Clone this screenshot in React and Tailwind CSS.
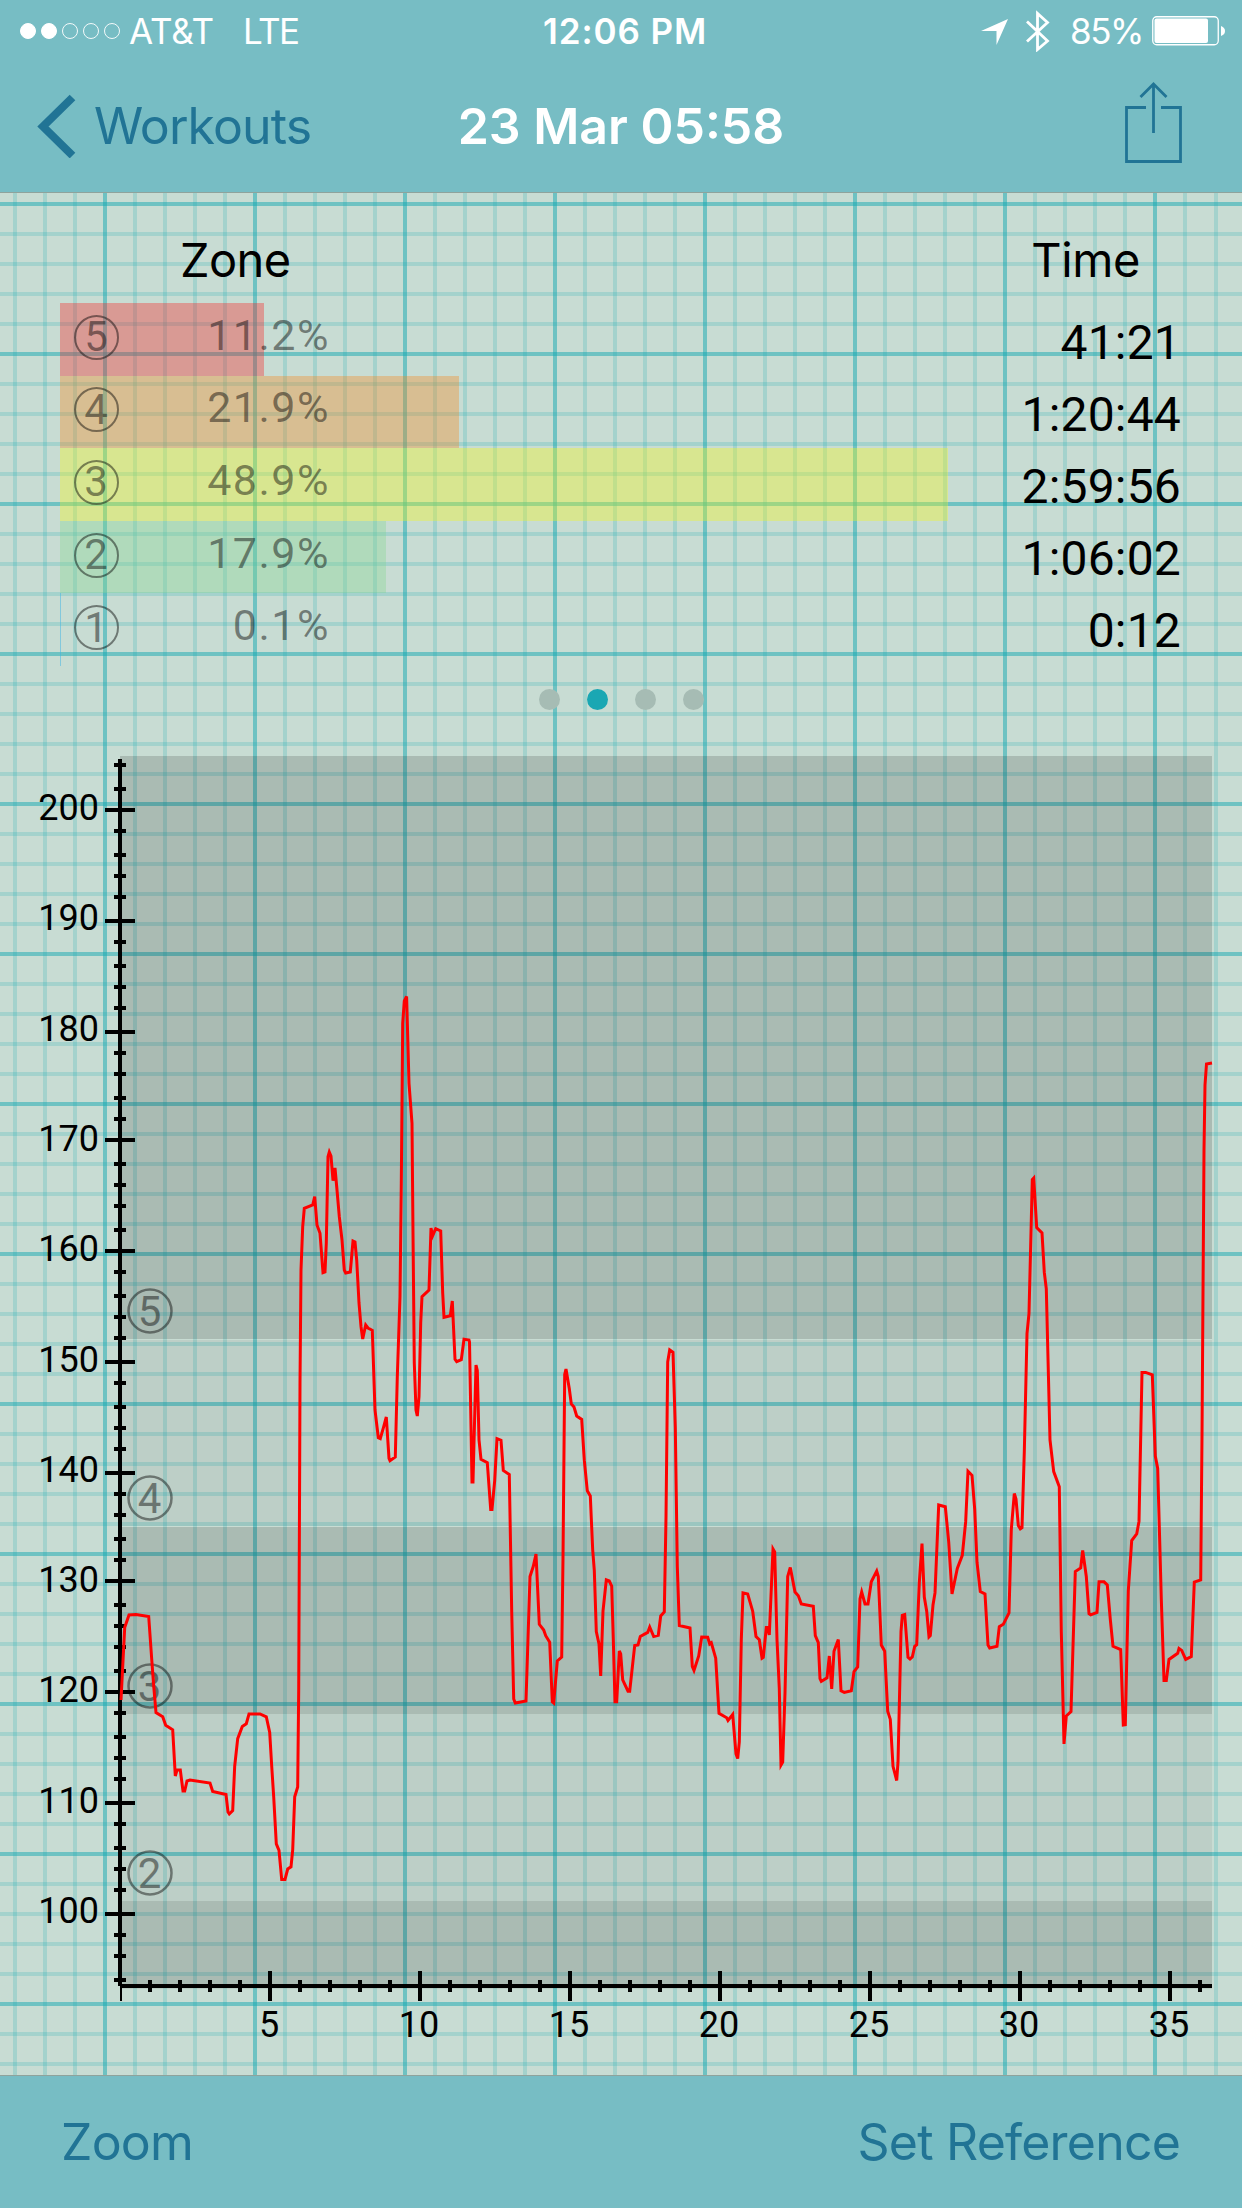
import React from "react";

const zones = [
  { zone: 5, percent: "11.2%", time: "41:21", width: 204, color: "bg-[rgba(249,31,31,0.35)]" },
  { zone: 4, percent: "21.9%", time: "1:20:44", width: 398.5, color: "bg-[rgba(246,134,26,0.35)]" },
  { zone: 3, percent: "48.9%", time: "2:59:56", width: 887.5, color: "bg-[rgba(246,249,20,0.35)]" },
  { zone: 2, percent: "17.9%", time: "1:06:02", width: 326, color: "bg-[rgba(131,214,143,0.35)]" },
  { zone: 1, percent: "0.1%", time: "0:12", width: 1, color: "bg-[rgba(60,180,230,0.5)]" },
];

// Shaded heart rate zones behind the curve: [top, bottom, opacity]
const bands = [
  [756, 1339, 0.15],
  [1340, 1526, 0.055],
  [1527, 1714, 0.15],
  [1714, 1901, 0.055],
  [1901, 1988.5, 0.15],
];

const bandLabels = [
  { zone: 5, y: 1311 },
  { zone: 4, y: 1498 },
  { zone: 3, y: 1686 },
  { zone: 2, y: 1873 },
];

// Y axis ticks, one for every 2 bpm, from 204 down to 94
const yTicks = [
  765, 789, 810, 831, 855, 876, 897, 921, 942, 966, 987, 1008, 1032, 1053,
  1074, 1098, 1119, 1140, 1164, 1185, 1206, 1230, 1251, 1272, 1296, 1317, 1338,
  1362, 1383, 1407, 1428, 1449, 1473, 1494, 1515, 1539, 1560, 1581, 1605, 1626,
  1647, 1671, 1692, 1713, 1737, 1758, 1779, 1803, 1824, 1848, 1869, 1890, 1914,
  1935, 1956, 1980,
];

const xTicks = Array.from({ length: 36 }, (_, i) => i + 1);
const bpmLabels = [200, 190, 180, 170, 160, 150, 140, 130, 120, 110, 100];

const heartRate = `
  121,1700 124.7,1627.6 129,1615 136,1614.6 148.7,1616.5 151.7,1659 153.7,1686 156,1712.6
  162.7,1716.8 165.7,1725.2 172.7,1729.8 175.3,1776 177,1770 180.3,1770 183,1791 184.7,1791
  187,1781 190,1780 210,1783 212.7,1791.4 226,1794.5 228,1812 229.3,1814 232.7,1810.6
  234.7,1766 237.7,1738.6 242.3,1726.4 246.3,1723.7 249,1714 260,1714 266.3,1716.8
  269.7,1732.5 271.7,1766 273.7,1796.8 276.3,1843.8 279,1850.4 281.7,1879.4 285,1879.4
  287.7,1869 291,1866.8 292.7,1850 294.7,1796.8 297.7,1787 298.7,1690 299.7,1460 300,1383
  301,1270 302.7,1226.7 304.3,1208.3 312.7,1205 314.7,1196.5 317,1225 320,1233.3 323,1272.7
  325,1272 326.3,1243 328,1156.7 329.3,1152 331,1156 333,1180.7 335,1168 337,1190
  339.3,1216.7 342,1240 344.3,1270 345.7,1273 350.3,1272 353,1241 355,1242 356.7,1260
  359,1303 361,1326.7 362.7,1339 365.7,1325 368,1328 372.3,1330.3 375,1410 378.3,1437.7
  380.3,1438.7 383.7,1426.7 386.3,1417 389,1458.3 390,1460.7 395.3,1457 397.3,1376.7
  400,1296.7 401.3,1183.3 402.7,1023.3 404.3,1001 406.6,996.5 409,1083.3 412,1123.3
  413,1233.3 414.3,1363.3 416,1410 417.3,1416 419,1396.7 420.7,1323 422,1296.7 429,1290
  431,1228 432.7,1235.7 435.7,1228.7 440.7,1231 442.7,1293 444,1317.3 450.3,1315.7
  452.3,1301 455,1359.3 456.7,1361.7 461.3,1359.7 464,1339.3 469,1340 469.5,1342
  472,1482 473,1482 476,1365 477.3,1370.4 479,1439.8 481,1459.4 487.3,1462.7 490.7,1509.5
  492,1509.5 494.7,1480.6 497,1438.6 501,1440.2 503.3,1470.4 509.3,1474.5 511.7,1611.2
  513.7,1699 515.3,1703 526,1701 530,1576.5 533.3,1566.3 536,1554 539.3,1624.3 543.7,1630
  545.7,1635.7 549.7,1642.2 552.3,1701.8 553.7,1703 557.3,1661 561.7,1657 563,1558.2
  564.7,1374.5 566,1369 569.3,1388.8 571.3,1403.9 574,1407 576.7,1416 581.7,1419.4
  584.3,1460.2 587.3,1490.8 590.3,1496 592.7,1550 594.3,1570.4 596.3,1631.6 599,1643.9
  600.7,1676 603,1611.2 606.3,1579.8 609.3,1581 611.7,1586 613.3,1639.8 615,1701.8
  616.7,1701.8 619.3,1651 620.7,1654 622.7,1679.8 628,1691.2 629.7,1691.2 634.7,1645.5
  638,1645 640.3,1636.5 647.7,1632.4 649.7,1627 653.7,1636.5 658.3,1635.3 660.7,1616
  664.3,1612 666,1517.3 667.7,1362 669.7,1350 673,1352.4 675.3,1427.6 677.3,1566.3
  679.3,1625.5 690,1628 692.3,1666.3 694,1670.4 698.7,1656 701.7,1637 707.7,1637.3
  709.7,1643.9 711.3,1642.7 715.7,1658.2 719,1713.3 726.7,1717.8 728,1720.5 732.7,1714.5
  736,1754 737.7,1758.5 739.3,1741.8 741.3,1639.8 743,1592.9 747.7,1594 752.7,1611.2
  756,1636.5 759.3,1639.8 762,1658.2 763.3,1657.3 766.3,1627.6 767.7,1627.6 769.3,1635
  773,1549 774.7,1552 777,1639.8 779.3,1688.8 781,1765 782.7,1762 785,1692.9 787.7,1576.5
  790.3,1567.5 795,1592 798.3,1595.7 801.3,1603.9 813.3,1606.3 815.3,1635.7 818.3,1642.7
  820,1678.6 821.3,1681.4 827,1677.8 829.3,1656 831.7,1689 834,1651.2 838.3,1639.5
  841,1690.8 844.3,1692.4 851.3,1690.8 854,1671.6 857.7,1667 860,1599 861.7,1592 865,1603.9
  868,1603.9 871.3,1581.8 876.7,1571 878.3,1576.5 881.3,1645 884.7,1651.2 887.7,1711.2
  890.3,1719.4 893,1766.3 896.7,1780.5 898,1762.2 901,1631.6 902.3,1615.3 904.7,1614.5
  908,1657.3 910,1659 912.3,1657 914.7,1646.3 916.7,1644.7 919.3,1582.7 922,1543.5
  924.3,1597 926.7,1611.2 929,1637 930.3,1635.7 933,1605 935,1592.9 938.7,1505 945.3,1506.7
  948.7,1541.8 952,1594 957.3,1568.4 962.3,1555.3 965.7,1521.4 968,1471.2 972,1475.3
  974.7,1509.2 977,1562.2 980.3,1591.6 985,1594 988,1645 989.7,1648 997,1646.3 999.3,1626.7
  1003.3,1624.3 1009,1612.9 1011.3,1529.6 1014.3,1493.5 1016,1499 1018.3,1525.5
  1020.3,1528.8 1022,1527.6 1024.3,1452 1027,1333.7 1029,1313.3 1032.3,1179.5 1033.7,1178
  1036.7,1227.6 1042,1232.9 1044.3,1272.4 1046.3,1288.8 1050,1439.8 1053.7,1471.6
  1059.3,1486.7 1061.3,1631.6 1064,1744 1066.3,1716 1071,1711.6 1075.3,1571.6 1080.7,1568
  1082.7,1550.5 1086.3,1576.5 1089,1613.7 1090.7,1614.9 1097,1612.4 1099,1581.8 1104,1581.8
  1107.3,1585 1110.3,1619.4 1113,1646.3 1120.7,1649.6 1123.3,1725 1125.3,1724.7
  1128.3,1590.8 1131.7,1540.6 1136.7,1534 1139,1521.4 1142,1372.4 1145.7,1372.4
  1152.3,1374.9 1155.3,1456 1157.7,1468.4 1161.3,1599 1164,1680.6 1166.3,1680.6 1169,1659.4
  1177.7,1653.3 1179,1648.4 1181.7,1650.4 1185.7,1659.4 1191.3,1656.5 1194.3,1582
  1200.7,1580 1202,1435.7 1204,1150 1205,1085 1206.5,1064 1212,1063`;

function StatusBar() {
  return (
    <div className="flex h-[60px] items-center pt-0.5 pl-5 text-[35px] leading-none text-white">
      <div className="flex gap-[5px]">
        {[1, 2, 3, 4, 5].map((n) => (
          <span
            key={n}
            className={`size-4 rounded-full border ${
              n <= 2 ? "border-white bg-white" : "border-white/90"
            }`}
          />
        ))}
      </div>
      <span className="ml-[9px] w-[114px] tracking-[-0.2px]">AT&amp;T</span>
      <span className="w-[300px] tracking-[-1.5px]">LTE</span>
      <span className="w-[437px] font-semibold tracking-[0.9px]">12:06 PM</span>
      <svg className="h-[42px] w-[70px] shrink-0" viewBox="980 9 70 42">
        <path d="M1008 18 996.500 44V30H981Z" fill="#fff" />
        <path
          d="M1027 20.500 1047.500 40 1037.500 48.500V12.500L1047.500 21.500 1027 40.500"
          fill="none"
          stroke="#fff"
          strokeWidth="2.800"
        />
      </svg>
      <span className="ml-5 w-[82px] tracking-[-1.5px]">85%</span>
      <svg className="h-[30px] w-[74px] shrink-0" viewBox="0 0 74 30">
        <rect x="0.750" y="0.750" width="65.500" height="28" rx="4" fill="none" stroke="#fff" strokeWidth="1.300" />
        <rect x="2.500" y="2.500" width="53.500" height="24.500" rx="2" fill="#fff" />
        <path d="M69 10c3 1 4 3 4 5s-1 4-4 5Z" fill="#fff" />
      </svg>
    </div>
  );
}

function NavBar() {
  return (
    <div className="grid h-[132px] grid-cols-[1fr_auto_1fr] items-center text-[50px] leading-none text-[#217495]">
      <div className="flex items-center pl-9">
        <svg className="h-[64px] w-10" viewBox="0 0 40 64">
          <path d="M36.500 3.500 7 32.500 36.500 61.500" fill="none" stroke="currentColor" strokeWidth="8" />
        </svg>
        <span className="ml-[18px] tracking-[-0.9px]">Workouts</span>
      </div>
      <h1 className="font-semibold text-white">23 Mar 05:58</h1>
      <div className="flex justify-end pr-[59px] pb-1.5">
        <svg className="h-[82px] w-[59px]" viewBox="1124 82 59 82">
          <g fill="none" stroke="currentColor" strokeWidth="2.800">
            <path d="M1146 107.500H1126.500V161.500H1180.500V107.500H1161" />
            <path d="M1153.500 133V84M1140.500 97 1153.500 84 1166.500 97" />
          </g>
        </svg>
      </div>
    </div>
  );
}

function GraphPaper() {
  const columns = Array.from({ length: 41 }, (_, i) => i);
  const rows = Array.from({ length: 63 }, (_, i) => i);
  return (
    <svg className="absolute inset-0 h-full w-full" viewBox="0 193 1242 1882">
      {columns.map((i) => (
        <rect
          key={i}
          x={i === 40 ? 1214 : 13 + i * 30}
          y="193"
          width="4"
          height="1882"
          fill="#14a8b2"
          fillOpacity={i % 5 === 3 ? 0.5 : 0.2}
        />
      ))}
      {rows.map((i) => (
        <rect
          key={i}
          x="0"
          y={202 + i * 30}
          width="1242"
          height="4"
          fill="#14a8b2"
          fillOpacity={i % 5 === 0 ? 0.5 : 0.2}
        />
      ))}
    </svg>
  );
}

function ZoneBadge({ zone }) {
  return (
    <span className="flex size-[45px] items-center justify-center rounded-full border-[2.500px] border-black/45 font-[Roboto] text-[42px] leading-none text-black/45">
      {zone}
    </span>
  );
}

function ZoneSummary() {
  return (
    <section className="relative text-black">
      <div className="flex h-[97px] justify-between pt-[37px] pr-[102px] pl-[180px] text-[47px] leading-[60px]">
        <span className="tracking-[-0.6px]">Zone</span>
        <span className="tracking-[-0.4px]">Time</span>
      </div>
      <div className="flex h-[376px] justify-between pt-[13px] pr-[61px] pl-[60px] font-[Roboto]">
        <div className="w-[887px]">
          {zones.map((z) => (
            <div key={z.zone} className="relative flex h-[72.6px] items-center">
              <div
                className={`absolute inset-y-0 left-0 ${z.color}`}
                style={{ width: z.width }}
              />
              <div className="relative flex w-[270px] items-center justify-between pb-1 pl-[13.500px]">
                <ZoneBadge zone={z.zone} />
                <span className="pb-1 text-[43px] leading-none tracking-[1.500px] text-black/45">
                  {z.percent}
                </span>
              </div>
            </div>
          ))}
        </div>
        <div className="pt-1 text-right text-[48px]">
          {zones.map((z) => (
            <div key={z.zone} className="h-[72px] leading-[72px] tracking-[0.2px]">
              {z.time}
            </div>
          ))}
        </div>
      </div>
    </section>
  );
}

function PageDots() {
  return (
    <div className="relative mt-[23px] flex justify-center gap-[27px]">
      {[0, 1, 2, 3].map((i) => (
        <span
          key={i}
          className={`size-[21px] rounded-full ${i === 1 ? "bg-[#1aa7b3]" : "bg-[#a6bcb4]"}`}
        />
      ))}
    </div>
  );
}

function HeartRateChart() {
  return (
    <svg
      className="relative mt-[35px] block h-[1330px] w-full font-[Roboto]"
      viewBox="0 745 1242 1330"
    >
      {bands.map(([top, bottom, opacity]) => (
        <rect key={top} x="120" y={top} width="1092" height={bottom - top} fillOpacity={opacity} />
      ))}

      {/* Axes */}
      <rect x="118" y="759" width="4" height="1227" />
      <rect x="120" y="1984" width="1092" height="4" />
      <rect x="120" y="1986" width="2" height="15" />
      {yTicks.map((y, i) =>
        i % 5 === 2 ? (
          <rect key={y} x="105" y={y - 2} width="30" height="4" />
        ) : (
          <rect key={y} x="114" y={y - 2} width="12" height="4" />
        )
      )}
      {xTicks.map((n) =>
        n % 5 === 0 ? (
          <rect key={n} x={118 + n * 30} y="1971" width="4" height="30" />
        ) : (
          <rect key={n} x={118 + n * 30} y="1980" width="4" height="12" />
        )
      )}

      <g fontSize="36">
        {bpmLabels.map((bpm) => (
          <text key={bpm} x="99" y={820 + (200 - bpm) * 11.03} textAnchor="end">
            {bpm}
          </text>
        ))}
        {xTicks
          .filter((n) => n % 5 === 0)
          .map((n) => (
            <text key={n} x={119 + n * 30} y="2037" textAnchor="middle">
              {n}
            </text>
          ))}
      </g>

      <g opacity="0.43">
        {bandLabels.map(({ zone, y }) => (
          <g key={zone}>
            <circle cx="150" cy={y} r="21.500" fill="none" stroke="#000" strokeWidth="2.500" />
            <text x="149.500" y={y + 14.5} fontSize="42" textAnchor="middle">
              {zone}
            </text>
          </g>
        ))}
      </g>

      <polyline points={heartRate} fill="none" stroke="#f00" strokeWidth="3" />
    </svg>
  );
}

export default function App() {
  return (
    <div className="flex h-[2208px] w-[1242px] flex-col overflow-hidden bg-[#c8dcd3] font-[Inter]">
      <header className="h-[193px] border-b border-[#8fa39c] bg-[#77bdc4]">
        <StatusBar />
        <NavBar />
      </header>
      <main className="relative h-[1882px]">
        <GraphPaper />
        <ZoneSummary />
        <PageDots />
        <HeartRateChart />
      </main>
      <footer className="flex h-[133px] items-center justify-between border-t border-[#8fa39c] bg-[#77bdc4] pr-[62px] pl-[61px] text-[50px] leading-none text-[#217495]">
        <span className="tracking-[-0.8px]">Zoom</span>
        <span className="tracking-[-0.8px]">Set Reference</span>
      </footer>
    </div>
  );
}
